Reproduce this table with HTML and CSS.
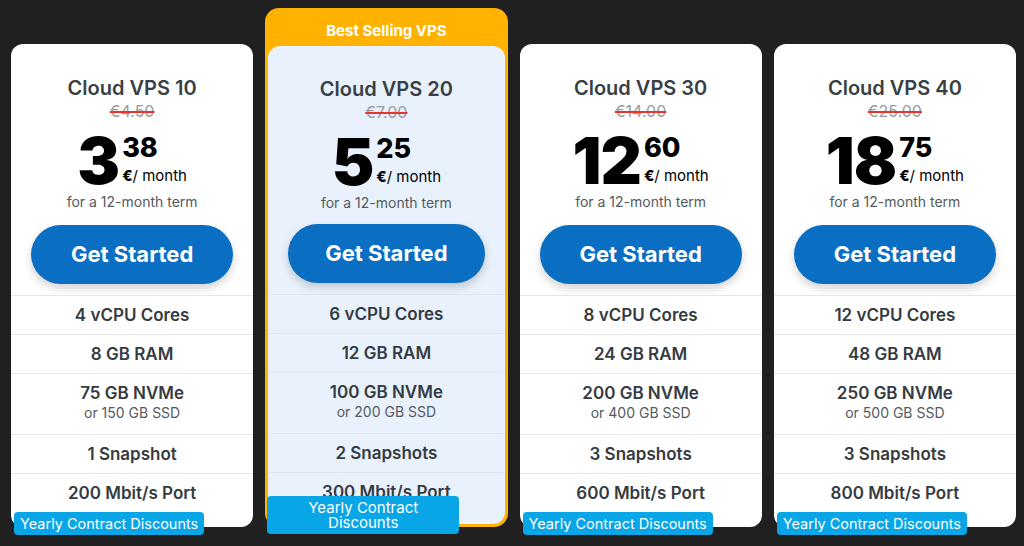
FILE: index.html
```html
<!DOCTYPE html>
<html lang="en">
<head>
    <meta charset="UTF-8">
    <meta name="viewport" content="width=device-width, initial-scale=1.0">
    <title>Cloud VPS Pricing</title>
    <link rel="stylesheet" href="styles.css">
</head>
<body>
    <div class="plans">
        <div class="plan">
            <div class="plan-body">
                <h3 class="plan-name">Cloud VPS 10</h3>
                <div class="plan-old"><s>€4.50</s></div>
                <div class="price">
                    <span class="price-main">3</span>
                    <span class="price-side">
                        <span class="price-cents">38</span>
                        <span class="price-unit"><b>€</b>/ month</span>
                    </span>
                </div>
                <div class="plan-term">for a 12-month term</div>
                <a class="btn" href="#">Get Started</a>
                <ul class="specs">
                    <li>4 vCPU Cores</li>
                    <li>8 GB RAM</li>
                    <li>75 GB NVMe<span class="spec-sub">or 150 GB SSD</span></li>
                    <li>1 Snapshot</li>
                    <li>200 Mbit/s Port</li>
                </ul>
            </div>
            <span class="discount">Yearly Contract Discounts</span>
        </div>

        <div class="plan plan-featured">
            <div class="plan-flag">Best Selling VPS</div>
            <div class="plan-body">
                <h3 class="plan-name">Cloud VPS 20</h3>
                <div class="plan-old"><s>€7.00</s></div>
                <div class="price">
                    <span class="price-main">5</span>
                    <span class="price-side">
                        <span class="price-cents">25</span>
                        <span class="price-unit"><b>€</b>/ month</span>
                    </span>
                </div>
                <div class="plan-term">for a 12-month term</div>
                <a class="btn" href="#">Get Started</a>
                <ul class="specs">
                    <li>6 vCPU Cores</li>
                    <li>12 GB RAM</li>
                    <li>100 GB NVMe<span class="spec-sub">or 200 GB SSD</span></li>
                    <li>2 Snapshots</li>
                    <li>300 Mbit/s Port</li>
                </ul>
            </div>
            <span class="discount">Yearly Contract Discounts</span>
        </div>

        <div class="plan">
            <div class="plan-body">
                <h3 class="plan-name">Cloud VPS 30</h3>
                <div class="plan-old"><s>€14.00</s></div>
                <div class="price">
                    <span class="price-main">12</span>
                    <span class="price-side">
                        <span class="price-cents">60</span>
                        <span class="price-unit"><b>€</b>/ month</span>
                    </span>
                </div>
                <div class="plan-term">for a 12-month term</div>
                <a class="btn" href="#">Get Started</a>
                <ul class="specs">
                    <li>8 vCPU Cores</li>
                    <li>24 GB RAM</li>
                    <li>200 GB NVMe<span class="spec-sub">or 400 GB SSD</span></li>
                    <li>3 Snapshots</li>
                    <li>600 Mbit/s Port</li>
                </ul>
            </div>
            <span class="discount">Yearly Contract Discounts</span>
        </div>

        <div class="plan">
            <div class="plan-body">
                <h3 class="plan-name">Cloud VPS 40</h3>
                <div class="plan-old"><s>€25.00</s></div>
                <div class="price">
                    <span class="price-main">18</span>
                    <span class="price-side">
                        <span class="price-cents">75</span>
                        <span class="price-unit"><b>€</b>/ month</span>
                    </span>
                </div>
                <div class="plan-term">for a 12-month term</div>
                <a class="btn" href="#">Get Started</a>
                <ul class="specs">
                    <li>12 vCPU Cores</li>
                    <li>48 GB RAM</li>
                    <li>250 GB NVMe<span class="spec-sub">or 500 GB SSD</span></li>
                    <li>3 Snapshots</li>
                    <li>800 Mbit/s Port</li>
                </ul>
            </div>
            <span class="discount">Yearly Contract Discounts</span>
        </div>
    </div>
</body>
</html>
```

FILE: styles.css
```css
body {
    margin: 0;
    padding: 0;
    background: #202020;
    font-family: 'Inter', 'Noto Sans', sans-serif;
    color: #3a3f46;
}

.plans {
    display: grid;
    grid-template-columns: repeat(4, 1fr);
    column-gap: 12px;
    align-items: end;
    height: 546px;
    box-sizing: border-box;
    padding: 0 8px 19px 11px;
}

.plan {
    position: relative;
    background: #fff;
    border-radius: 12px;
}

.plan-body {
    padding: 32px 0 15px;
    text-align: center;
}

/* featured card: orange frame with a flag on top */
.plan-featured {
    background: #ffb300;
    border-radius: 14px;
    padding: 0 3px 3px;
}

.plan-flag {
    height: 38px;
    box-sizing: border-box;
    padding-top: 14px;
    color: #fff;
    font-size: 15px;
    font-weight: 700;
    line-height: 18px;
    text-align: center;
}

.plan-featured .plan-body {
    background: #e8f1fc;
    border-radius: 12px;
    padding: 31px 0 13px;
}

.plan-name {
    margin: 0;
    font-size: 20px;
    font-weight: 600;
    line-height: 24px;
    color: #3a3f46;
}

.plan-old {
    font-size: 16px;
    line-height: 22px;
    color: #9b9b9b;
}

.plan-old s {
    text-decoration-color: #e3342f;
    text-decoration-thickness: 2px;
}

.price {
    display: flex;
    justify-content: center;
    margin-top: 7px;
    color: #000;
}

.price-main {
    font-size: 64px;
    font-weight: 900;
    line-height: 64px;
    letter-spacing: -1px;
}

.price-side {
    display: flex;
    flex-direction: column;
    justify-content: space-between;
    align-items: flex-start;
    padding: 6px 0 8px;
    margin-left: 3px;
}

.price-cents {
    font-size: 27px;
    font-weight: 800;
    line-height: 26px;
}

.price-unit {
    font-size: 15px;
    line-height: 18px;
}

.price-unit b {
    font-weight: 800;
}

.plan-term {
    font-size: 14px;
    line-height: 18px;
    color: #555a60;
}

.btn {
    display: block;
    margin: 14px 20px 0;
    height: 59px;
    line-height: 59px;
    border-radius: 30px;
    background: #0a6fc2;
    color: #fff;
    font-size: 22px;
    font-weight: 700;
    text-decoration: none;
    box-shadow: 0 4px 8px rgba(0, 0, 0, 0.18);
}

.plan-featured .btn {
    margin-top: 12px;
}

.specs {
    list-style: none;
    margin: 11px 0 0;
    padding: 0;
}

.specs li {
    border-top: 1px solid #e6e6e6;
    padding: 8px 10px;
    font-size: 17px;
    font-weight: 600;
    line-height: 22px;
    color: #363b42;
}

.spec-sub {
    display: block;
    margin-bottom: 4px;
    font-size: 14px;
    font-weight: 400;
    line-height: 18px;
    color: #555a60;
}

.plan-featured .specs li {
    border-top-color: #dde6f2;
}

.discount {
    position: absolute;
    left: 3px;
    bottom: -8px;
    padding: 2px 6px;
    background: #08a6e6;
    border-radius: 4px;
    color: #fff;
    font-size: 14.5px;
    line-height: 19px;
    white-space: nowrap;
    text-align: center;
}

.plan-featured .discount {
    left: 2px;
    bottom: -7px;
    width: 192px;
    box-sizing: border-box;
    padding: 4px 36px;
    font-size: 15px;
    line-height: 15px;
    white-space: normal;
}
```
